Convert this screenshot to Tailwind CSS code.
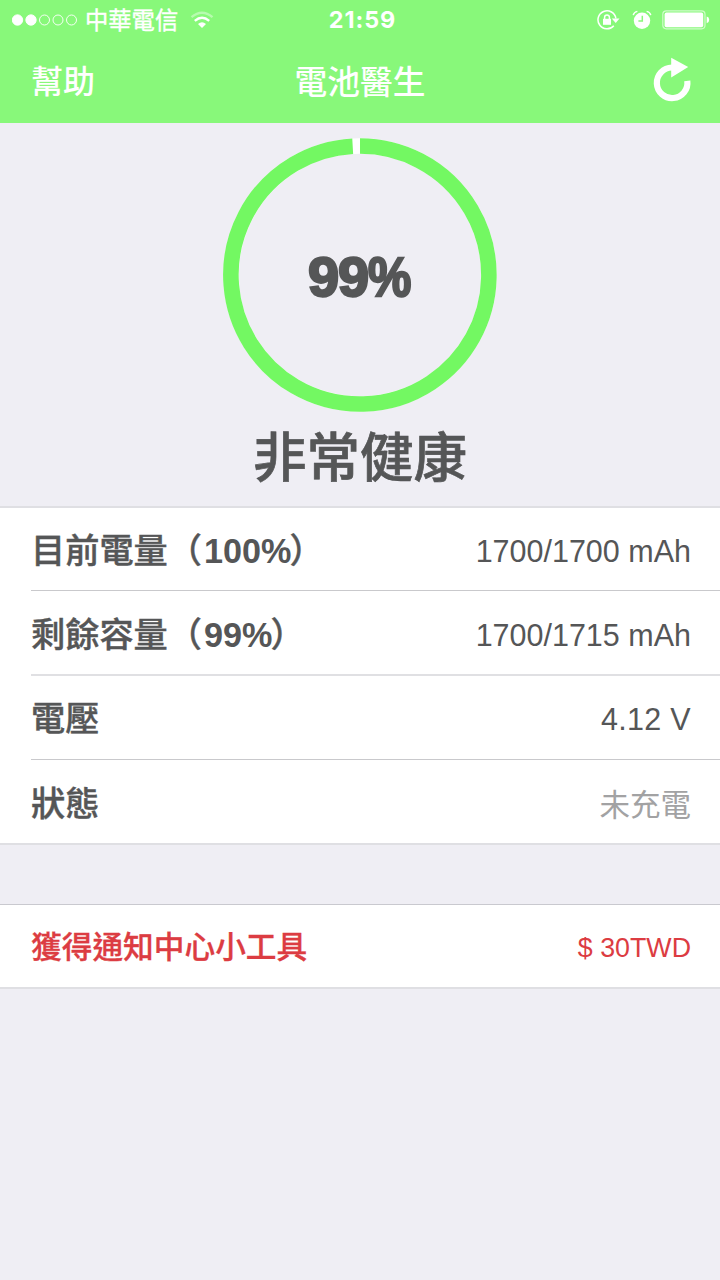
<!DOCTYPE html>
<html lang="zh-Hant">
<head>
<meta charset="utf-8">
<title>電池醫生</title>
<script src="https://cdn.jsdelivr.net/npm/@tailwindcss/browser@4"></script>
</head>
<body class="w-[720px] h-[1280px] overflow-hidden bg-[#efeef4] text-[#555657] font-['Liberation_Sans','Noto_Sans_CJK_TC',sans-serif] flex flex-col">
  <header class="h-[123px] shrink-0 bg-[#88f87a] text-white flex flex-col">
    <div class="h-10 grid grid-cols-3 items-center pl-3 pr-[10px]">
      <div class="flex items-center">
        <svg class="w-[66px] h-[14px]" viewBox="0 0 66 14" fill="none" stroke="#fff" stroke-width="0.9">
          <circle cx="5.5" cy="7" r="5.2" fill="#fff"/><circle cx="19" cy="7" r="5.2" fill="#fff"/>
          <circle cx="32.5" cy="7" r="5"/><circle cx="46" cy="7" r="5"/><circle cx="59.5" cy="7" r="5"/>
        </svg>
        <span class="ml-[7px] pt-0.5 text-[23.3px] leading-[38px] whitespace-nowrap [-webkit-text-stroke:0.4px_#fff]">中華電信</span>
        <svg class="ml-3 w-6 h-[18px]" viewBox="0 0 24 18" fill="none" stroke="#fff" stroke-width="2.4">
          <path d="M1.5 6.2Q12 -2.8 22.5 6.2" opacity=".4"/>
          <path d="M4.8 9.8Q12 3.8 19.2 9.8"/>
          <path d="M8 13.1Q12 9.4 16 13.1L12 17Z" fill="#fff" stroke="none"/>
        </svg>
      </div>
      <div class="text-center text-[23.4px] font-bold leading-10 tracking-[0.9px] font-['Inter',sans-serif] pl-[3px]">21:59</div>
      <div class="flex items-center justify-end">
        <svg class="w-[23px] h-5" viewBox="0 0 23 20" fill="none" stroke="#fff" stroke-width="1.5">
          <path d="M16.8 15.7A9 9 0 1 1 18.9 8.5"/>
          <path d="M14.8 8.5H22.5L18.7 13Z" fill="#fff" stroke="none"/>
          <rect x="6" y="8.8" width="8" height="6" fill="#fff" stroke="none"/>
          <path d="M7.6 9V7.3a2.4 2.4 0 0 1 4.8 0V9"/>
        </svg>
        <svg class="ml-3 w-5 h-5" viewBox="0 0 20 20" fill="none" stroke="#fff">
          <circle cx="10" cy="10.7" r="8.2" fill="#fff" stroke="none"/>
          <path d="M1.2 5.2Q2 2 5.4 1.4M18.8 5.2Q18 2 14.6 1.4" stroke-width="1.4"/>
          <path d="M10.3 5.8V11H6.4" stroke="#88f87a" stroke-width="1.5"/>
        </svg>
        <svg class="ml-[10px] w-[48px] h-5" viewBox="0 0 48 20">
          <rect x=".8" y=".8" width="42.2" height="18" rx="3.5" fill="none" stroke="#fff" stroke-width="1.2" opacity=".6"/>
          <rect x="2.6" y="2.6" width="38.6" height="14.6" rx="1.8" fill="#fff"/>
          <path d="M44.7 6.5Q47.2 7 47.2 9.8T44.7 13.2Z" fill="#fff"/>
        </svg>
      </div>
    </div>
    <div class="h-[83px] grid grid-cols-3 items-center pl-[31px] pr-7">
      <div class="text-[32px] font-medium leading-[81px] pt-0.5">幫助</div>
      <div class="text-center text-[32.7px] font-medium leading-[81px] pt-0.5 whitespace-nowrap pr-[3px]">電池醫生</div>
      <svg class="justify-self-end w-[40px] h-[46px] overflow-visible" viewBox="0 3 40 46">
        <path d="M35.3 24.8A15.3 15.3 0 1 1 20 11.5" fill="none" stroke="#fff" stroke-width="6.2"/>
        <path d="M19.2 1.8L36.2 11L19.2 21.6Z" fill="#fff"/>
      </svg>
    </div>
  </header>

  <section class="h-[383px] shrink-0 flex flex-col items-center pt-[15px]">
    <div class="grid place-items-center w-[274px] h-[274px]">
      <svg class="col-start-1 row-start-1 w-[274px] h-[274px]" viewBox="0 0 274 274" fill="none" stroke-width="15.6">
        <circle cx="137" cy="137" r="129" stroke="#fff"/>
        <path d="M137 8A129 129 0 1 1 129.7 8.2" stroke="#73f862"/>
      </svg>
      <div class="col-start-1 row-start-1 pl-1.5 pt-1 text-[56px] leading-none font-bold [-webkit-text-stroke:2.4px_#555657]"><span class="tracking-[-1px]">99</span><span class="inline-block origin-left scale-x-[0.87]">%</span></div>
    </div>
    <div class="mt-[11px] text-[53.5px] leading-[72px] font-medium [-webkit-text-stroke:0.7px_#555657]">非常健康</div>
  </section>

  <section class="shrink-0 bg-white border-t-2 border-[#dfdfe3]">
    <div class="ml-[31px] pr-[29px] h-[83px] flex justify-between items-center border-b border-[#c9c9cc]">
      <span class="pt-[5px] text-[34.2px] font-medium [-webkit-text-stroke:0.4px_#555657]">目前電量（<b class="ml-[2px] -mr-[2px] [-webkit-text-stroke:0]">100%</b>）</span><span class="pt-[5px] text-[30.5px]">1700/1700 mAh</span>
    </div>
    <div class="ml-[31px] pr-[29px] h-[85px] flex justify-between items-center border-b-2 border-[#e0e0e3]">
      <span class="pt-[6px] text-[34.2px] font-medium [-webkit-text-stroke:0.4px_#555657]">剩餘容量（<b class="ml-[2px] -mr-[2px] [-webkit-text-stroke:0]">99%</b>）</span><span class="pt-[7px] text-[30.5px]">1700/1715 mAh</span>
    </div>
    <div class="ml-[31px] pr-[29px] h-[84px] flex justify-between items-center border-b border-[#c9c9cc]">
      <span class="pt-[5px] text-[34.2px] font-medium [-webkit-text-stroke:0.4px_#555657]">電壓</span><span class="pt-1 text-[30.5px] tracking-[0.3px]">4.12 V</span>
    </div>
    <div class="pl-[31px] pr-[29px] h-[85px] flex justify-between items-center border-b-2 border-[#dfdfe3]">
      <span class="pt-[6px] text-[34.2px] font-medium [-webkit-text-stroke:0.4px_#555657]">狀態</span><span class="pt-[8px] text-[30.5px] text-[#a2a2a3]">未充電</span>
    </div>
  </section>

  <section class="mt-[59px] h-[85px] shrink-0 bg-white border-t border-b-2 border-t-[#c9c9cf] border-b-[#dfdfe3] pl-[31px] pr-[29px] flex justify-between items-center text-[#dc3c42]">
    <span class="pt-1 text-[30.7px] font-medium [-webkit-text-stroke:0.3px_#dc3c42]">獲得通知中心小工具</span><span class="pt-[5px] text-[26.8px]">$ 30TWD</span>
  </section>
</body>
</html>
